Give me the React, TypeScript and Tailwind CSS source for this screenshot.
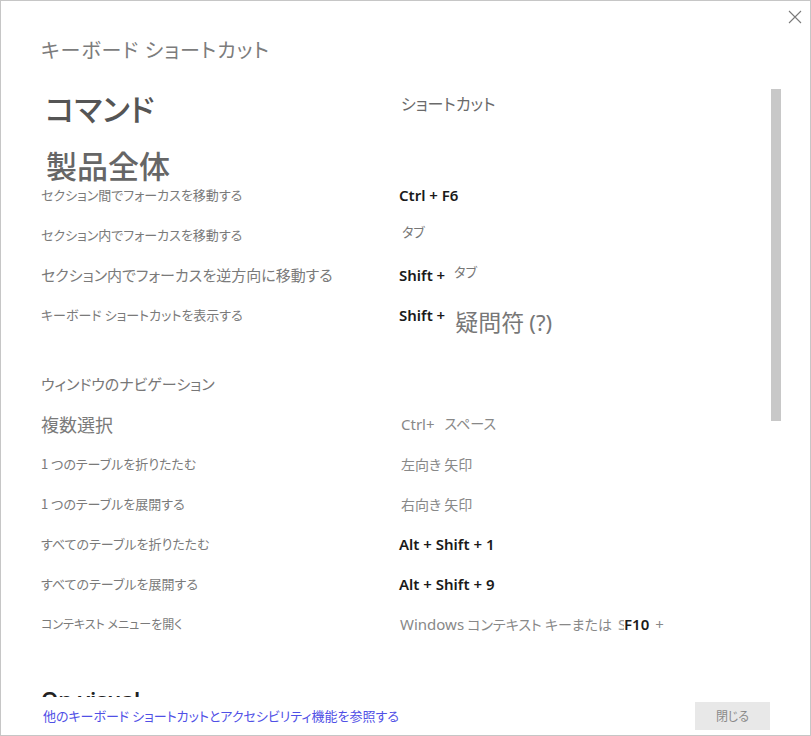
import React from "react"

const jp = "font-['Noto_Sans_CJK_JP',sans-serif] [font-feature-settings:'palt']"
const latin = "font-['Noto_Sans','Noto_Sans_CJK_JP',sans-serif]"

function Keys({ text }: { text: string }) {
  return <span className={`${latin} font-semibold text-[15px] text-[#1a1a1a]`}>{text}</span>
}

function Row({ label, size = "text-[13px]", children }: { label: string; size?: string; children: React.ReactNode }) {
  return (
    <div className="grid grid-cols-[358px_1fr] grid-rows-[40px] h-[40px] items-center">
      <div className={`${size} text-[#7a7a7a] whitespace-nowrap`}>{label}</div>
      <div className="flex items-center whitespace-nowrap">{children}</div>
    </div>
  )
}

export default function App() {
  return (
    <div className={`${jp} w-[811px] h-[736px] bg-white border border-[#c6c6c6] flex flex-col relative overflow-hidden`}>
      {/* close */}
      <button className="absolute right-[8px] top-[9px] w-[14px] h-[14px]">
        <svg viewBox="0 0 14 14" width="14" height="14">
          <path d="M1 1 L13 13 M13 1 L1 13" stroke="#7a7a7a" strokeWidth="1.1" fill="none" />
        </svg>
      </button>

      <div className="h-[84px] pl-[40px] pt-[35px]">
        <h1 className="text-[20px] leading-[28px] text-[#7c7c7c] tracking-[1px]">キーボード ショートカット</h1>
      </div>

      <div className="h-[612px] flex overflow-hidden">
        <div className="flex-1 pl-[40px]">
          <div className="grid grid-cols-[358px_1fr] h-[46px] items-center">
            <div className="text-[31px] leading-[40px] text-[#555] font-medium pl-[4px]">コマンド</div>
            <div className="text-[16px] leading-[20px] text-[#6a6a6a] self-start pt-[8px] pl-[2px]">ショートカット</div>
          </div>
          <div className="h-[44px] pt-[16px]">
            <div className="text-[31px] leading-[36px] text-[#666] font-medium pl-[5px]">製品全体</div>
          </div>

          <Row label="セクション間でフォーカスを移動する">
            <Keys text="Ctrl + F6" />
          </Row>
          <Row label="セクション内でフォーカスを移動する">
            <span className="text-[13px] text-[#777] pl-[3px] -translate-y-[3px]">タブ</span>
          </Row>
          <Row label="セクション内でフォーカスを逆方向に移動する" size="text-[15px]">
            <Keys text="Shift +" />
            <span className="text-[13px] text-[#777] pl-[9px] -translate-y-[3px]">タブ</span>
          </Row>
          <Row label="キーボード ショートカットを表示する">
            <Keys text="Shift +" />
            <span className="text-[23px] leading-[30px] text-[#777] pl-[10px] translate-y-[6px]">
              疑問符 <span className={`${latin} text-[22px]`}>(?)</span>
            </span>
          </Row>

          <div className="h-[40px] mt-[29px] flex items-center text-[15px] text-[#777]">ウィンドウのナビゲーション</div>

          <Row label="複数選択" size="text-[18px]">
            <span className={`${latin} text-[15px] text-[#888] pl-[2px]`}>Ctrl+</span>
            <span className="text-[14px] text-[#888] pl-[10px] -translate-y-[1px]">スペース</span>
          </Row>
          <Row label="1 つのテーブルを折りたたむ">
            <span className="text-[14px] text-[#888] pl-[2px]">左向き 矢印</span>
          </Row>
          <Row label="1 つのテーブルを展開する">
            <span className="text-[14px] text-[#888] pl-[2px]">右向き 矢印</span>
          </Row>
          <Row label="すべてのテーブルを折りたたむ">
            <Keys text="Alt + Shift + 1" />
          </Row>
          <Row label="すべてのテーブルを展開する">
            <Keys text="Alt + Shift + 9" />
          </Row>
          <Row label="コンテキスト メニューを開く" size="text-[12px]">
            <span className="text-[14px] text-[#888] pl-[1px]">
              <span className={`${latin} text-[15px]`}>Windows</span> コンテキスト キーまたは{" "}
            </span>
            <span className={`${latin} text-[15px] text-[#999] inline-block w-[6px] overflow-hidden ml-[6px]`}>S</span>
            <Keys text="F10" />
            <span className={`${latin} text-[15px] text-[#888] pl-[6px]`}>+</span>
          </Row>

          <div className={`${latin} h-[40px] mt-[35px] flex items-center text-[22px] font-semibold text-[#222]`}>On visual</div>
        </div>
        <div className="w-[10px] mr-[29px] pt-[4px]">
          <div className="h-[332px] bg-[#c8c8c8]" />
        </div>
      </div>

      <div className="h-[38px] flex items-center justify-between pl-[42px] pr-[40px]">
        <a className="text-[13px] text-[#5050e6] cursor-pointer">他のキーボード ショートカットとアクセシビリティ機能を参照する</a>
        <button className="w-[75px] h-[28px] bg-[#e8e8e8] text-[12px] text-[#8a8a8a]">閉じる</button>
      </div>
    </div>
  )
}
